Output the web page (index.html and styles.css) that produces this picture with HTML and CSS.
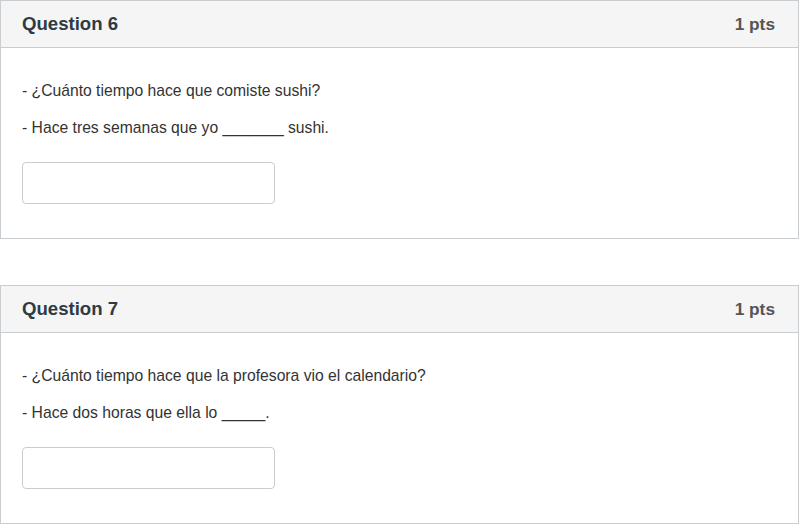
FILE: index.html
```html
<!DOCTYPE html>
<html lang="es">
<head>
<meta charset="utf-8">
<link rel="stylesheet" href="styles.css">
</head>
<body>
<div class="page">
  <section class="question">
    <header class="q-header">
      <h2 class="q-title">Question 6</h2>
      <span class="q-pts">1 pts</span>
    </header>
    <div class="q-body">
      <p>- ¿Cuánto tiempo hace que comiste sushi?</p>
      <p>- Hace tres semanas que yo _______ sushi.</p>
      <input class="answer" type="text">
    </div>
  </section>
  <section class="question">
    <header class="q-header">
      <h2 class="q-title">Question 7</h2>
      <span class="q-pts">1 pts</span>
    </header>
    <div class="q-body">
      <p>- ¿Cuánto tiempo hace que la profesora vio el calendario?</p>
      <p>- Hace dos horas que ella lo _____.</p>
      <input class="answer" type="text">
    </div>
  </section>
</div>
</body>
</html>
```
FILE: styles.css
```css
html, body {
  margin: 0;
  padding: 0;
  background: #ffffff;
}
body {
  font-family: "Liberation Sans", Arial, sans-serif;
  color: #333333;
}
.page {
  display: flex;
  flex-direction: column;
  gap: 46px;
  width: 799px;
}
.question {
  border: 1px solid #c7cdd1;
  background: #fff;
}
.q-header {
  display: flex;
  justify-content: space-between;
  align-items: center;
  height: 46px;
  padding: 0 23px 0 21px;
  background: #f5f5f5;
  border-bottom: 1px solid #c7cdd1;
}
.q-title {
  margin: 0;
  font-size: 18.6px;
  font-weight: bold;
  color: #2d3b45;
}
.q-pts {
  font-size: 17.3px;
  font-weight: bold;
  color: #555555;
}
.q-body {
  padding: 32px 21px 34px;
}
.q-body p {
  margin: 0 0 16px;
  font-size: 15.7px;
  line-height: 21px;
  color: #333333;
}
.answer {
  display: block;
  margin-top: 24px;
  width: 253px;
  height: 42px;
  box-sizing: border-box;
  border: 1px solid #cccccc;
  border-radius: 4px;
  background: #fff;
  padding: 0 8px;
}
```
